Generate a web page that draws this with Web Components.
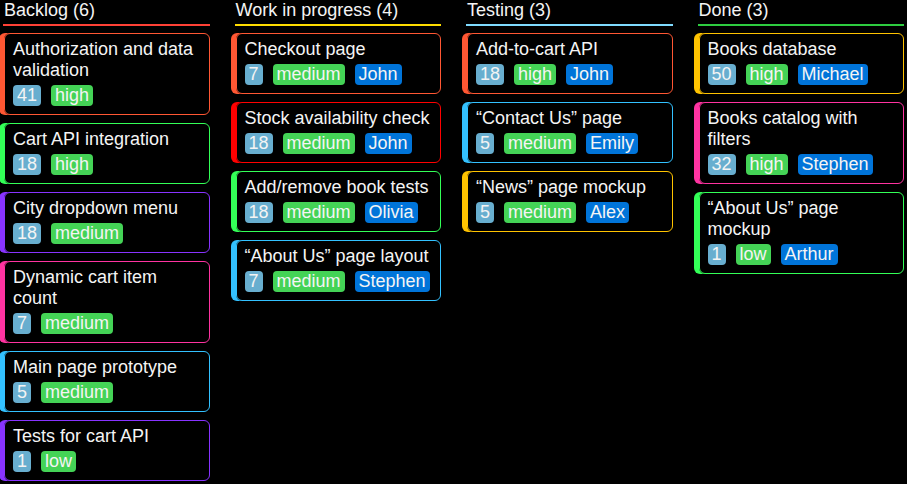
<!DOCTYPE html>
<html lang="en">
<head>
<meta charset="utf-8">
<title>Kanban board</title>
<style>
body { margin: 0; background: #000; color: #f4f4f4; font: 18px/21px "Liberation Sans", Arial, sans-serif; overflow-x: hidden; }
</style>
</head>
<body>
<kanban-board>
  <kanban-column name="Backlog" color="#ff4136">
    <task-card color="#ff5733" points="41" priority="high">Authorization and data validation</task-card>
    <task-card color="#33ff57" points="18" priority="high">Cart API integration</task-card>
    <task-card color="#8833ff" points="18" priority="medium">City dropdown menu</task-card>
    <task-card color="#ff33a1" points="7" priority="medium">Dynamic cart item count</task-card>
    <task-card color="#33c1ff" points="5" priority="medium">Main page prototype</task-card>
    <task-card color="#8833ff" points="1" priority="low">Tests for cart API</task-card>
  </kanban-column>
  <kanban-column name="Work in progress" color="#ffdc00">
    <task-card color="#ff5733" points="7" priority="medium" owner="John">Checkout page</task-card>
    <task-card color="#ff0000" points="18" priority="medium" owner="John">Stock availability check</task-card>
    <task-card color="#33ff57" points="18" priority="medium" owner="Olivia">Add/remove book tests</task-card>
    <task-card color="#33c1ff" points="7" priority="medium" owner="Stephen">“About Us” page layout</task-card>
  </kanban-column>
  <kanban-column name="Testing" color="#7fdbff">
    <task-card color="#ff5733" points="18" priority="high" owner="John">Add-to-cart API</task-card>
    <task-card color="#33c1ff" points="5" priority="medium" owner="Emily">“Contact Us” page</task-card>
    <task-card color="#ffc300" points="5" priority="medium" owner="Alex">“News” page mockup</task-card>
  </kanban-column>
  <kanban-column name="Done" color="#2ecc40">
    <task-card color="#ffc300" points="50" priority="high" owner="Michael">Books database</task-card>
    <task-card color="#ff33a1" points="32" priority="high" owner="Stephen">Books catalog with filters</task-card>
    <task-card color="#33ff57" points="1" priority="low" owner="Arthur">“About Us” page mockup</task-card>
  </kanban-column>
</kanban-board>
<script>
class KanbanBoard extends HTMLElement {
  constructor() {
    super();
    this.attachShadow({ mode: "open" }).innerHTML = `
      <style>
        :host { display: grid; grid-template-columns: repeat(4, minmax(0, 1fr)); gap: 21px; align-items: start; margin-left: -1px; padding-right: 3px; }
      </style>
      <slot></slot>`;
  }
}

class KanbanColumn extends HTMLElement {
  connectedCallback() {
    if (this.shadowRoot) return;
    this.attachShadow({ mode: "open" }).innerHTML = `
      <style>
        :host { display: block; }
        h2 { margin: 0 0 7px 4px; padding: 0 0 3px 1px; border-bottom: 2px solid var(--rule); font: inherit; }
        .cards { display: grid; gap: 8px; }
      </style>
      <section>
        <h2></h2>
        <div class="cards"><slot></slot></div>
      </section>`;
    const heading = this.shadowRoot.querySelector("h2");
    heading.textContent = `${this.getAttribute("name")} (${this.querySelectorAll("task-card").length})`;
    heading.style.setProperty("--rule", this.getAttribute("color"));
  }
}

class TaskBadge extends HTMLElement {
  constructor() {
    super();
    this.attachShadow({ mode: "open" }).innerHTML = `
      <style>
        :host { display: block; padding: 0 4px; border-radius: 4px; background: #68aecf; color: #f4f4f4; }
        :host([kind="priority"]) { background: #44d356; }
        :host([kind="owner"]) { background: #0074d9; }
      </style>
      <slot></slot>`;
  }
}

class TaskCard extends HTMLElement {
  connectedCallback() {
    if (this.shadowRoot) return;
    this.attachShadow({ mode: "open" }).innerHTML = `
      <style>
        :host { display: block; }
        article { margin-left: 5px; padding: 5px 8px 8px; border: 1px solid var(--accent); border-radius: 6px; box-shadow: -5px 0 0 var(--accent); }
        h3 { margin: 0 0 4px; font: inherit; }
        .badges { display: flex; flex-wrap: wrap; gap: 4px 10px; }
      </style>
      <article>
        <h3><slot></slot></h3>
        <div class="badges"></div>
      </article>`;
    this.shadowRoot.querySelector("article").style.setProperty("--accent", this.getAttribute("color"));
    const badges = this.shadowRoot.querySelector(".badges");
    for (const kind of ["points", "priority", "owner"]) {
      if (!this.hasAttribute(kind)) continue;
      const badge = document.createElement("task-badge");
      badge.setAttribute("kind", kind);
      badge.textContent = this.getAttribute(kind);
      badges.append(badge);
    }
  }
}

customElements.define("task-badge", TaskBadge);
customElements.define("task-card", TaskCard);
customElements.define("kanban-column", KanbanColumn);
customElements.define("kanban-board", KanbanBoard);
</script>
</body>
</html>
